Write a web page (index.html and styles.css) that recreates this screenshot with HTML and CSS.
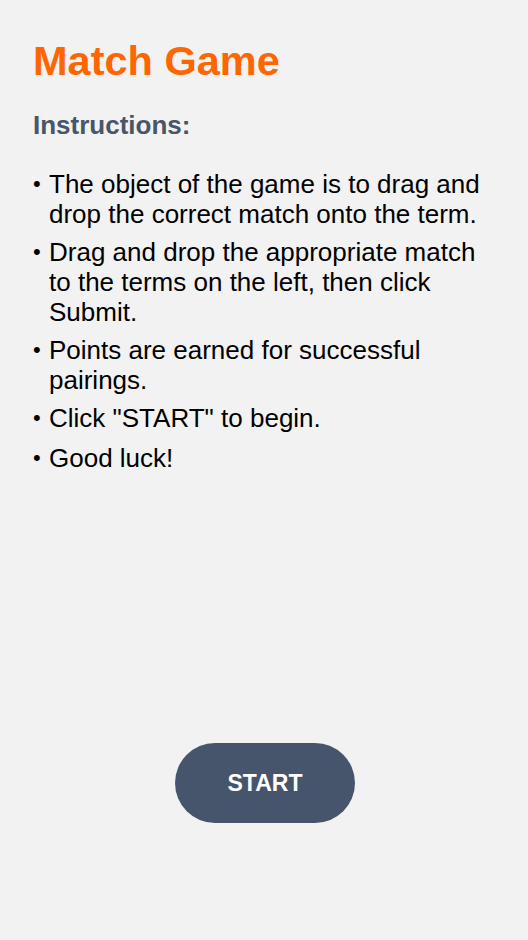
FILE: index.html
```html
<!DOCTYPE html>
<html lang="en">
<head>
<meta charset="utf-8">
<title>Match Game</title>
<link rel="stylesheet" href="styles.css">
</head>
<body>
<main class="page">
  <h1 class="title">Match Game</h1>
  <h2 class="subtitle">Instructions:</h2>
  <ul class="rules">
    <li>The object of the game is to drag and drop the correct match onto the term.</li>
    <li>Drag and drop the appropriate match to the terms on the left, then click Submit.</li>
    <li>Points are earned for successful pairings.</li>
    <li>Click "START" to begin.</li>
    <li>Good luck!</li>
  </ul>
  <div class="actions">
    <button class="start" type="button">START</button>
  </div>
</main>
</body>
</html>
```

FILE: styles.css
```css
html, body {
  margin: 0;
  padding: 0;
  background: #f2f2f2;
}
body {
  font-family: "Liberation Sans", Arial, sans-serif;
  color: #000;
}
.page {
  box-sizing: border-box;
  min-height: 940px;
  padding: 37px 33px 117px 33px;
  display: flex;
  flex-direction: column;
}
.title {
  margin: 0;
  font-size: 41.5px;
  line-height: 48px;
  font-weight: bold;
  color: #ff6600;
}
.subtitle {
  margin: 25px 0 0 0;
  font-size: 26px;
  line-height: 30px;
  font-weight: bold;
  color: #4a5568;
}
.rules {
  list-style: none;
  margin: 29px 0 0 0;
  padding: 0;
  display: flex;
  flex-direction: column;
  gap: 8px;
}
.rules li {
  display: flex;
  align-items: baseline;
  font-size: 26px;
  line-height: 30px;
}
.rules li::before {
  content: "•";
  flex: 0 0 16px;
  font-size: 22px;
  position: relative;
  top: -2px;
}
.actions {
  margin-top: auto;
  display: flex;
  justify-content: center;
}
.start {
  width: 180px;
  height: 80px;
  margin-left: 2px;
  border: none;
  border-radius: 40px;
  background: #46556c;
  color: #fff;
  font-family: "Liberation Sans", Arial, sans-serif;
  font-size: 23px;
  font-weight: bold;
  cursor: pointer;
}
```
